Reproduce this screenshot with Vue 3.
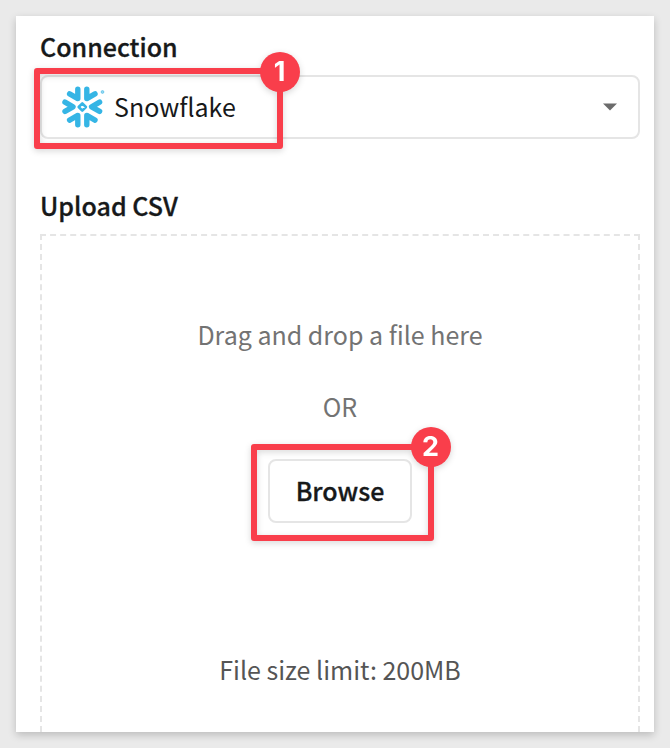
<script setup>
import { ref } from 'vue'

const connection = ref('Snowflake')
const sizeLimit = ref('200MB')
</script>

<template>
  <main class="page">
    <section class="panel">
      <h2 class="label">Connection</h2>
      <div class="select">
        <svg class="logo" viewBox="0 0 44 42" aria-hidden="true">
          <g fill="none" stroke="#35b5e5" stroke-width="5.4" stroke-linecap="round" stroke-linejoin="round">
            <path d="M15.8 3.2V12.6L7.6 7.8" />
            <path d="M24.8 3.2V12.6L33 7.8" />
            <path d="M15.8 38.8V29.4L7.6 34.2" />
            <path d="M24.8 38.8V29.4L33 34.2" />
            <path d="M3 16.2L11 20.8L3 25.4" />
            <path d="M37.6 16.2L29.6 20.8L37.6 25.4" />
          </g>
          <path d="M20.3 17.4L23.9 21L20.3 24.6L16.7 21Z" fill="none" stroke="#35b5e5" stroke-width="2.6" stroke-linejoin="round" />
          <circle cx="40.5" cy="6" r="1.4" fill="#35b5e5" fill-opacity=".5" stroke="#35b5e5" stroke-width="1" stroke-opacity=".55" />
        </svg>
        <span class="value">{{ connection }}</span>
        <svg class="caret" viewBox="0 0 14 8" aria-hidden="true">
          <path d="M0 .5H14L7 7.5Z" fill="#6b6b6b" />
        </svg>
        <div class="callout callout-connection"><span class="step">1</span></div>
      </div>

      <h2 class="label label-upload">Upload CSV</h2>
      <div class="dropzone">
        <p class="hint">Drag and drop a file here</p>
        <p class="hint or">OR</p>
        <div class="browse-wrap">
          <button class="browse" type="button">Browse</button>
          <div class="callout callout-browse"><span class="step">2</span></div>
        </div>
        <p class="limit">File size limit: {{ sizeLimit }}</p>
      </div>
    </section>
  </main>
</template>

<style>
body {
  margin: 0;
  background: #eaeaea;
}
</style>

<style scoped>
.page {
  box-sizing: border-box;
  height: 748px;
  padding: 16px;
  overflow: hidden;
  background: #eaeaea;
  color: #17191a;
  font-family: "Noto Sans CJK SC", "Noto Sans", sans-serif;
  font-size: 25px;
  line-height: 36px;
}
.panel {
  box-sizing: border-box;
  width: 638px;
  height: 716px;
  padding: 12px 14px 0 24px;
  background: #fff;
  box-shadow: 0 3px 8px rgba(0, 0, 0, 0.2);
}
.label {
  margin: 0;
  height: 47px;
  font-size: 25px;
  font-weight: 500;
  line-height: 36px;
  -webkit-text-stroke: 0.3px #17191a;
}
.select {
  position: relative;
  box-sizing: border-box;
  display: flex;
  align-items: center;
  width: 600px;
  height: 64px;
  padding: 0 21px 0 20px;
  border: 2px solid #e5e5e5;
  border-radius: 8px;
}
.logo {
  width: 44px;
  height: 42px;
}
.value {
  flex: 1;
  padding: 0 0 2px 8px;
}
.caret {
  width: 14px;
  height: 8px;
}
.label-upload {
  margin-top: 48px;
}
.dropzone {
  box-sizing: border-box;
  display: flex;
  flex-direction: column;
  align-items: center;
  width: 600px;
  height: 498px;
  border: 2px dashed #e5e5e5;
  border-bottom: 0;
  padding-top: 80px;
}
.hint,
.limit {
  margin: 0;
  color: #737373;
}
.or {
  margin-top: 36px;
}
.browse-wrap {
  position: relative;
  margin-top: 35px;
}
.browse {
  box-sizing: border-box;
  display: block;
  width: 144px;
  height: 64px;
  padding: 0 0 2px;
  border: 2px solid #e5e5e5;
  border-radius: 8px;
  background: #fff;
  color: #17191a;
  font: inherit;
  font-weight: 500;
  -webkit-text-stroke: 0.3px #17191a;
}
.limit {
  margin-top: 128px;
  color: #555;
}
.callout {
  position: absolute;
  box-sizing: border-box;
  border: 6px solid #f93e4b;
  border-radius: 3px;
  filter: drop-shadow(0 2px 3px rgba(0, 0, 0, 0.16));
}
.callout-connection {
  left: -8px;
  top: -9px;
  width: 249px;
  height: 81px;
}
.callout-browse {
  left: -17.5px;
  top: -15.5px;
  width: 183.5px;
  height: 97px;
}
.step {
  position: absolute;
  top: -22px;
  right: -22.5px;
  width: 40px;
  height: 40px;
  border-radius: 50%;
  background: #f93e4b;
  color: #fff;
  font-family: Inter, sans-serif;
  font-size: 27px;
  font-weight: 700;
  line-height: 39px;
  text-align: center;
}
.callout-browse .step {
  top: -23px;
}
</style>
